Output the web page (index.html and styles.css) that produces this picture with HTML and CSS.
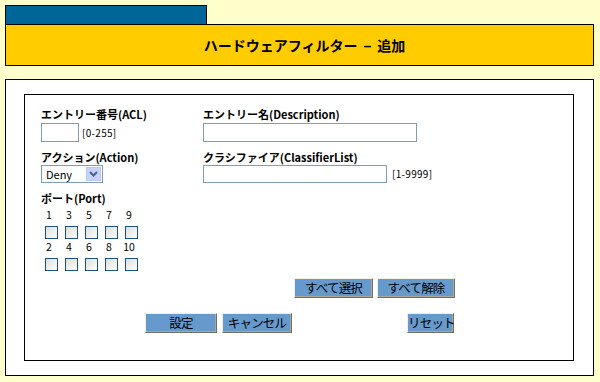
FILE: index.html
```html
<!DOCTYPE html>
<html lang="ja">
<head>
<meta charset="utf-8">
<title>ハードウェアフィルター - 追加</title>
<link rel="stylesheet" href="styles.css">
</head>
<body>
<div class="page">
  <div class="tab"></div>
  <div class="header"><h1 class="title">ハードウェアフィルター<span class="sep">–</span>追加</h1></div>
  <div class="outer">
    <div class="inner">
      <div class="fields">
        <div class="label">エントリー番号(ACL)</div>
        <div class="label">エントリー名(Description)</div>
        <div class="field-row"><input class="text w-acl" type="text"><span class="hint hint-acl">[0-255]</span></div>
        <div class="field-row"><input class="text w-desc" type="text"></div>
        <div class="label label-2">アクション(Action)</div>
        <div class="label label-2">クラシファイア(ClassifierList)</div>
        <div class="field-row row-2">
          <div class="select">
            <span class="select-value">Deny</span>
            <span class="select-btn"><svg width="9" height="6" viewBox="0 0 9 6"><path d="M1 1 L4.5 4.5 L8 1" fill="none" stroke="#4d6185" stroke-width="2"/></svg></span>
          </div>
        </div>
        <div class="field-row row-2"><input class="text w-cls" type="text"><span class="hint hint-cls">[1-9999]</span></div>
      </div>
      <div class="label label-port">ポート(Port)</div>
      <div class="ports">
        <div class="nums"><span>1</span><span>3</span><span>5</span><span>7</span><span>9</span></div>
        <div class="boxes"><input type="checkbox" class="cb"><input type="checkbox" class="cb"><input type="checkbox" class="cb"><input type="checkbox" class="cb"><input type="checkbox" class="cb"></div>
        <div class="nums nums-2"><span>2</span><span>4</span><span>6</span><span>8</span><span>10</span></div>
        <div class="boxes"><input type="checkbox" class="cb"><input type="checkbox" class="cb"><input type="checkbox" class="cb"><input type="checkbox" class="cb"><input type="checkbox" class="cb"></div>
      </div>
      <div class="btn-row row-sel">
        <button class="btn b-all">すべて選択</button>
        <button class="btn b-none">すべて解除</button>
      </div>
      <div class="btn-row row-act">
        <button class="btn b-set">設定</button>
        <button class="btn b-cancel">キャンセル</button>
        <button class="btn b-reset">リセット</button>
      </div>
    </div>
  </div>
</div>
</body>
</html>
```
FILE: styles.css
```css
* { box-sizing: border-box; }
html, body { margin: 0; }
body {
  padding: 5px;
  background: #ffffcc;
  font-family: "Noto Sans CJK JP", "DejaVu Sans", sans-serif;
  color: #000;
}
.page { width: 589px; }
.tab {
  width: 202px;
  height: 19px;
  background: #006699;
  border: 1px solid #000;
  border-bottom: none;
}
.header {
  height: 42px;
  background: #ffcc00;
  border: 1px solid #000;
  display: flex;
  align-items: center;
  justify-content: center;
}
.title {
  margin: 0 0 0 10px;
  font-size: 14px;
  font-weight: bold;
  line-height: 16px;
  white-space: nowrap;
}
.sep {
  display: inline-block;
  margin: 0 6px;
  font-family: "Liberation Sans", sans-serif;
}
.outer {
  margin-top: 13px;
  height: 297px;
  background: #fff;
  border: 1px solid #000;
  padding: 14px 19px 0 18px;
}
.inner {
  height: 267px;
  border: 1px solid #000;
  padding: 13px 0 0 16px;
}
.fields {
  display: grid;
  grid-template-columns: 162px 1fr;
}
.label {
  font-size: 11px;
  font-weight: bold;
  line-height: 12px;
  height: 12px;
  white-space: nowrap;
}
.label-2 { margin-top: 9px; }
.field-row {
  display: flex;
  align-items: center;
  margin-top: 3px;
}
.row-2 { margin-top: 2px; }
.text {
  height: 19px;
  border: 1px solid #7f9db9;
  background: #fff;
  padding: 0 2px;
  margin: 0;
  font-size: 11px;
  font-family: inherit;
}
.row-2 .text { height: 18px; }
.w-acl { width: 38px; }
.w-desc { width: 214px; }
.w-cls { width: 184px; }
.hint {
  font-size: 10px;
  line-height: 12px;
  letter-spacing: 0.3px;
}
.hint-acl { margin-left: 3px; }
.hint-cls { margin-left: 5px; }
.select {
  width: 62px;
  height: 18px;
  border: 1px solid #7f9db9;
  display: flex;
  align-items: center;
  justify-content: space-between;
  padding: 0 1px 0 4px;
  background: #fff;
}
.select-value {
  font-size: 11px;
  line-height: 14px;
}
.select-btn {
  width: 15px;
  height: 14px;
  background: #c3d3fd;
  border: 1px solid #b9cbf5;
  display: flex;
  align-items: center;
  justify-content: center;
}
.label-port { margin-top: 9px; }
.ports { margin-left: -2px; }
.nums {
  display: flex;
  margin-top: 5px;
  height: 12px;
}
.nums-2 { margin-top: 2px; }
.nums span {
  width: 20px;
  text-align: center;
  font-size: 10.5px;
  line-height: 12px;
}
.boxes {
  display: flex;
  gap: 7px;
  margin-top: 5px;
  padding-left: 6px;
  height: 13px;
}
.cb {
  appearance: none;
  -webkit-appearance: none;
  width: 13px;
  height: 13px;
  margin: 0;
  border: 1px solid #1c5180;
  background: linear-gradient(135deg, #dcdcd7 0%, #ffffff 100%);
}
.btn-row {
  display: flex;
  gap: 4px;
}
.row-sel { margin-top: 7px; padding-left: 253px; }
.row-act { margin-top: 15px; padding-left: 104px; }
.btn {
  height: 20px;
  margin: 0;
  padding: 0;
  background: #6699cc;
  border-style: solid;
  border-width: 1px;
  border-color: #f1efe2 #716f64 #716f64 #f1efe2;
  box-shadow: inset -1px -1px 0 #aca899;
  font-family: inherit;
  font-size: 12.5px;
  letter-spacing: -0.8px;
  line-height: 16px;
  white-space: nowrap;
  color: #000;
}
.b-all { width: 79px; }
.b-none { width: 78px; }
.b-set { width: 72px; }
.b-cancel { width: 70px; margin-left: 1px; }
.b-reset { width: 47px; margin-left: 111px; }
```
